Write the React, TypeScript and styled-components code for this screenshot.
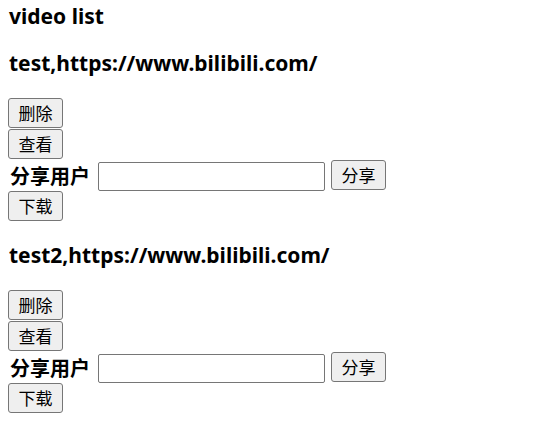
import styled, { createGlobalStyle } from "styled-components";
import { useState } from "react";

const GlobalStyle = createGlobalStyle`
  body {
    margin: 0;
    padding: 0 8px;
    background: #fff;
    color: #000;
    font-family: "Noto Sans", "Noto Sans CJK SC", sans-serif;
  }
`;

const Title = styled.div`
  font-size: 21px;
  font-weight: bold;
  line-height: 32px;
  height: 29px;
  padding-left: 1px;
`;
const Section = styled.div`
  display: flex;
  flex-direction: column;
  align-items: flex-start;
`;
const VideoName = styled.h3`
  margin: 19px 0;
  padding-left: 1px;
  font-size: 21px;
  line-height: 31px;
  font-weight: bold;
`;
const Button = styled.button<{ $gap?: boolean }>`
  width: 55px;
  height: 30px;
  margin-top: ${(props) => (props.$gap ? "1px" : "0")};
  padding: 0;
  font-family: "Noto Sans CJK SC", sans-serif;
  font-size: 17px;
  line-height: 28px;
  color: #000;
  background: #efefef;
  border: 1px solid #767676;
  border-radius: 3px;
`;
const ShareRow = styled.div`
  display: flex;
  align-items: center;
  height: 32px;
`;
const Label = styled.span`
  font-family: "Noto Sans CJK SC", sans-serif;
  font-size: 20px;
  font-weight: bold;
  margin: 0 8px 0 2px;
`;
const Input = styled.input`
  width: 227px;
  height: 29px;
  box-sizing: border-box;
  margin: 2px 6px 0 0;
  border: 1px solid #767676;
  border-radius: 2px;
  padding: 1px 2px;
`;

const videos = [
  { name: "test", url: "https://www.bilibili.com/" },
  { name: "test2", url: "https://www.bilibili.com/" },
];

function VideoItem({ name, url }: { name: string; url: string }) {
  const [user, setUser] = useState("");
  return (
    <Section>
      <VideoName>
        {name},{url}
      </VideoName>
      <Button>删除</Button>
      <Button $gap>查看</Button>
      <ShareRow>
        <Label>分享用户</Label>
        <Input value={user} onChange={(e) => setUser(e.target.value)} />
        <Button>分享</Button>
      </ShareRow>
      <Button>下载</Button>
    </Section>
  );
}

export default function App() {
  return (
    <>
      <GlobalStyle />
      <Title>video list</Title>
      {videos.map((v) => (
        <VideoItem key={v.name} name={v.name} url={v.url} />
      ))}
    </>
  );
}
